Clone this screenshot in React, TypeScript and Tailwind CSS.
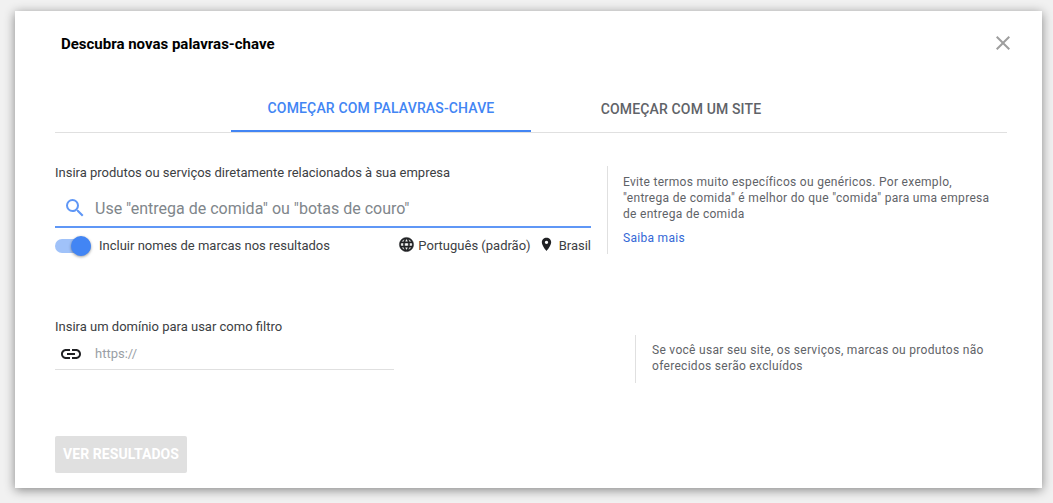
import React from "react";

const GlobeIcon = () => (
  <svg width="17" height="17" viewBox="0 0 24 24" fill="#202124" className="mb-[3px] shrink-0">
    <path d="M11.99 2C6.47 2 2 6.48 2 12s4.47 10 9.99 10C17.52 22 22 17.52 22 12S17.52 2 11.99 2zm6.93 6h-2.95c-.32-1.25-.78-2.45-1.38-3.56 1.84.63 3.37 1.91 4.33 3.56zM12 4.04c.83 1.2 1.48 2.53 1.91 3.96h-3.82c.43-1.43 1.08-2.76 1.91-3.96zM4.26 14C4.1 13.36 4 12.69 4 12s.1-1.36.26-2h3.38c-.08.66-.14 1.32-.14 2s.06 1.34.14 2H4.26zm.82 2h2.95c.32 1.25.78 2.45 1.38 3.56-1.84-.63-3.37-1.9-4.33-3.56zm2.95-8H5.08c.96-1.66 2.49-2.93 4.33-3.56C8.81 5.55 8.35 6.75 8.03 8zM12 19.96c-.83-1.2-1.48-2.53-1.91-3.96h3.82c-.43 1.43-1.08 2.76-1.91 3.96zM14.34 14H9.66c-.09-.66-.16-1.32-.16-2s.07-1.35.16-2h4.68c.09.65.16 1.32.16 2s-.07 1.34-.16 2zm.25 5.56c.6-1.11 1.06-2.31 1.38-3.56h2.95c-.96 1.65-2.49 2.93-4.33 3.56zM16.36 14c.08-.66.14-1.32.14-2s-.06-1.34-.14-2h3.38c.16.64.26 1.31.26 2s-.1 1.36-.26 2h-3.38z" stroke="#202124" strokeWidth="0.6" />
  </svg>
);

const PinIcon = () => (
  <svg width="15" height="15" viewBox="0 0 24 24" fill="#202124" className="shrink-0">
    <path d="M12 1C7.8 1 4.5 4.3 4.5 8.5 4.5 14 12 22.5 12 22.5S19.500 14 19.500 8.500C19.500 4.300 16.200 1 12 1zm0 10.200a2.700 2.700 0 1 1 0-5.400 2.700 2.700 0 0 1 0 5.400z" />
  </svg>
);

const LinkIcon = () => (
  <svg width="24" height="24" viewBox="0 0 24 24" fill="#202124" className="shrink-0">
    <path d="M3.9 12c0-1.71 1.39-3.1 3.1-3.1h4V7H7c-2.76 0-5 2.24-5 5s2.24 5 5 5h4v-1.9H7c-1.71 0-3.1-1.39-3.1-3.1zM8 13h8v-2H8v2zm9-6h-4v1.9h4c1.71 0 3.1 1.39 3.1 3.1s-1.39 3.1-3.1 3.1h-4V17h4c2.76 0 5-2.24 5-5s-2.24-5-5-5z" />
  </svg>
);

const SearchIcon = () => (
  <svg width="24" height="24" viewBox="0 0 24 24" fill="#5f97f6" className="mb-[2px] shrink-0">
    <path d="M15.5 14h-.79l-.28-.27A6.471 6.471 0 0 0 16 9.5 6.5 6.5 0 1 0 9.5 16c1.61 0 3.09-.59 4.23-1.57l.27.28v.79l5 4.99L20.49 19l-4.99-5zm-6 0C7.01 14 5 11.99 5 9.5S7.01 5 9.5 5 14 7.01 14 9.5 11.99 14 9.5 14z" />
  </svg>
);

const CloseIcon = () => (
  <svg width="24" height="24" viewBox="0 0 24 24" fill="#9e9e9e" className="shrink-0">
    <path d="M19 6.41 17.59 5 12 10.59 6.41 5 5 6.41 10.59 12 5 17.59 6.41 19 12 13.41 17.59 19 19 17.59 13.41 12z" />
  </svg>
);

export default function App() {
  return (
    <div className="h-[503px] w-[1053px] overflow-hidden bg-[#f1f1f1] pl-[15px] pt-[11px] font-['Roboto',sans-serif]">
      <div className="flex h-[477px] w-[1027px] flex-col bg-white pl-10 pr-[35px] shadow-[0_2px_10px_rgba(0,0,0,0.45)]">
        <div className="flex h-[67px] items-center justify-between pb-[1px] pl-1.5">
          <h1 className="text-[15px] font-bold text-black">Descubra novas palavras-chave</h1>
          <button className="-mr-[8px] mb-[2px] flex"><CloseIcon /></button>
        </div>

        <div className="flex h-[55px] justify-center border-b border-[#e0e0e0]">
          <div className="flex h-[54px] w-[300px] items-center justify-center border-b-2 border-[#4285f4] pt-[8px] text-[14px] font-medium tracking-[0.15px] text-[#4285f4]">
            COMEÇAR COM PALAVRAS-CHAVE
          </div>
          <div className="flex h-[54px] w-[300px] items-center justify-center pt-[8px] text-[14px] font-medium tracking-[0.15px] text-[#5f6368]">
            COMEÇAR COM UM SITE
          </div>
        </div>

        <div className="mt-[33px] flex h-[88px]">
          <div className="w-[536px]">
            <div className="mt-[-1px] text-[13px] leading-[16px] text-[#3c4043]">
              Insira produtos ou serviços diretamente relacionados à sua empresa
            </div>
            <div className="mt-[9px] flex h-[38px] items-center gap-[8px] border-b-2 border-[#5f97f6] pl-2 pt-[2px]">
              <SearchIcon />
              <span className="text-[16px] text-[#80868b]">Use "entrega de comida" ou "botas de couro"</span>
            </div>
            <div className="mt-[8px] flex h-[20px] items-center text-[13px] text-[#3c4043]">
              <div className="relative mr-[8px] h-[14px] w-[36px] rounded-full bg-[#a0c2f9]">
                <div className="absolute -top-[3px] right-0 h-5 w-5 rounded-full bg-[#4285f4] shadow-[0_1px_3px_rgba(0,0,0,0.4)]" />
              </div>
              <span>Incluir nomes de marcas nos resultados</span>
              <div className="ml-auto flex items-center">
                <GlobeIcon />
                <span className="ml-[3px]">Português (padrão)</span>
                <span className="mb-[4px] ml-[8px]"><PinIcon /></span>
                <span className="ml-[5px]">Brasil</span>
              </div>
            </div>
          </div>
          <div className="ml-4 w-[385px] border-l border-[#e0e0e0] pl-[15px] pt-[8px] text-[12px] leading-[16px] tracking-[0.3px] text-[#5f6368]">
            <p>Evite termos muito específicos ou genéricos. Por exemplo, "entrega de comida" é melhor do que "comida" para uma empresa de entrega de comida</p>
            <p className="mt-[8px] text-[#3367d6]">Saiba mais</p>
          </div>
        </div>

        <div className="mt-[65px] flex">
          <div className="w-[339px]">
            <div className="text-[13px] leading-[16px] text-[#3c4043]">Insira um domínio para usar como filtro</div>
            <div className="flex h-[35px] items-center gap-[12px] border-b border-[#e0e0e0] pl-1 pt-[3px]">
              <LinkIcon />
              <span className="text-[13px] text-[#9aa0a6]">https://</span>
            </div>
          </div>
          <div className="ml-[241px] mt-[16px] h-[48px] w-[372px] border-l border-[#e0e0e0] pl-4 pt-[7px] text-[12px] leading-[16px] tracking-[0.3px] text-[#5f6368]">
            Se você usar seu site, os serviços, marcas ou produtos não oferecidos serão excluídos
          </div>
        </div>

        <button className="mt-[53px] h-[37px] w-[132px] rounded-[2px] bg-[#e0e0e0] text-[14px] font-bold tracking-[0.08px] text-white">
          VER RESULTADOS
        </button>
      </div>
    </div>
  );
}
